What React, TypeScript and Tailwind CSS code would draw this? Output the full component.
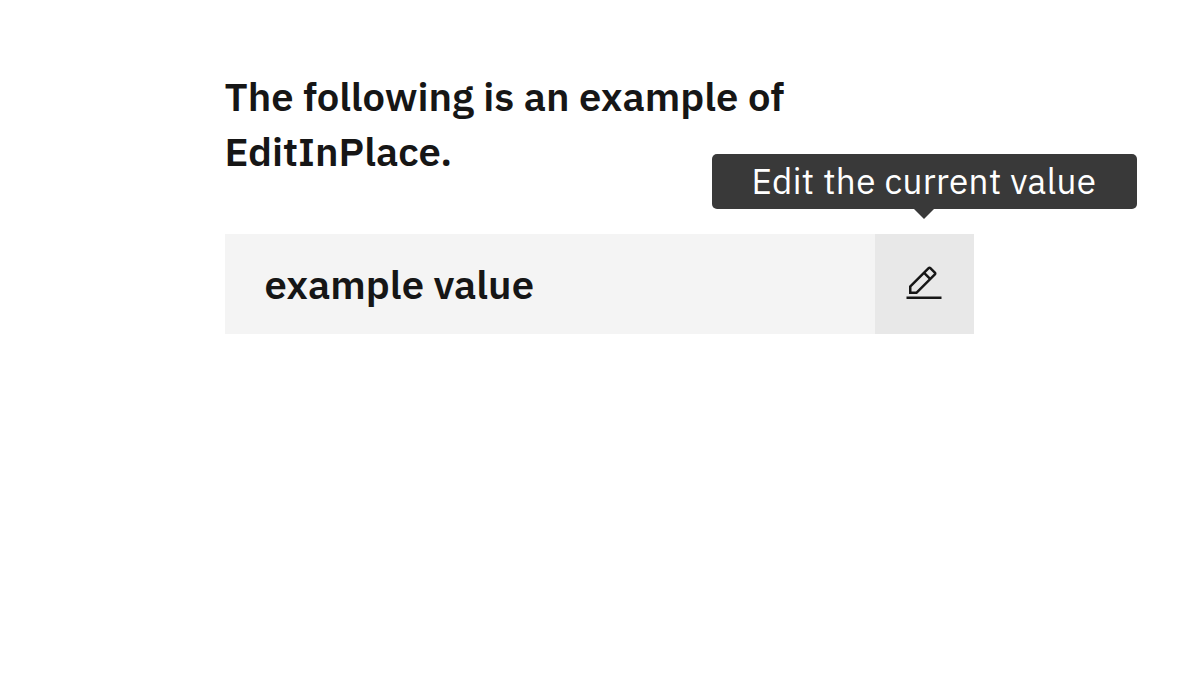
const heading = "font-['IBM_Plex_Sans','Noto_Sans',sans-serif] font-semibold text-[#161616]";

function EditIcon() {
  return (
    <svg className="mr-0.5" width="40" height="40" viewBox="0 0 32 32" fill="currentColor" aria-hidden="true">
      <path d="M2 26h28v2H2zM25.4 9c.8-.8.8-2 0-2.800l-3.600-3.600c-.8-.8-2-.8-2.800 0l-15 15V24h6.400l15-15zm-5-5L24 7.600l-3 3L17.400 7l3-3zM6 22v-3.600l10-10 3.600 3.600-10 10H6z" />
    </svg>
  );
}

export default function App() {
  return (
    <main className="min-h-[680px] bg-white pl-[225px] pt-[69px]">
      <h1 className={`${heading} -ml-[0.5px] text-[40px] leading-[55px]`}>
        <span className="block w-fit whitespace-nowrap">The following is an example of</span>
        <span className="block w-fit whitespace-nowrap">EditInPlace.</span>
      </h1>
      <div className="mt-[55px] flex h-[100px] w-[749.400px] bg-[#f4f4f4]">
        <div className={`${heading} flex flex-1 items-center pl-[39.5px] text-[40px] leading-[50px]`}>
          <span className="whitespace-nowrap">example value</span>
        </div>
        <button className="relative flex w-[99.400px] items-center justify-center bg-[#e8e8e8] text-[#161616]" aria-label="Edit the current value">
          <EditIcon />
          <span className="absolute -left-[163.500px] -top-20 flex h-[55px] w-[425px] items-center justify-center rounded-[5px] bg-[#393939] font-['IBM_Plex_Sans','Noto_Sans',sans-serif] text-[35px] font-normal tracking-[0.4px] text-white">
            <span className="whitespace-nowrap">Edit the current value</span>
            <svg className="absolute top-full" width="20" height="10" viewBox="0 0 20 10"><path fill="#393939" d="M0 0h20L10 10z" /></svg>
          </span>
        </button>
      </div>
    </main>
  );
}
